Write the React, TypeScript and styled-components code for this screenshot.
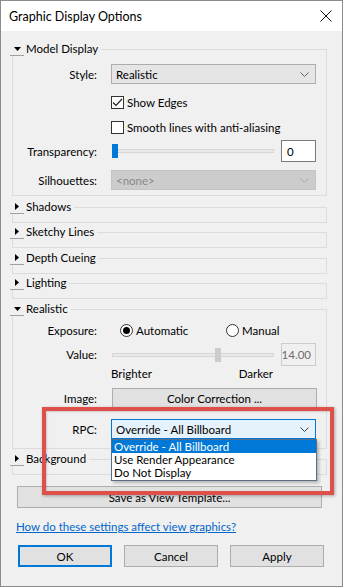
import React from 'react'
import styled, { createGlobalStyle } from 'styled-components'

const GlobalStyle = createGlobalStyle`
  html, body {
    margin: 0;
    padding: 0;
    background: #ffffff;
  }
  body {
    font-family: Lato, 'Noto Sans', Arial, sans-serif;
    font-size: 11.5px;
    color: #000;
  }
  * {
    box-sizing: border-box;
  }
`

const Window = styled.div`
  position: relative;
  width: 343px;
  height: 587px;
  border: 1px solid #8c8c8c;
  background: #f0f0f0;
  display: flex;
  flex-direction: column;
  overflow: hidden;
`

const TitleBar = styled.div`
  height: 30px;
  background: #ffffff;
  display: flex;
  align-items: center;
  justify-content: space-between;
  padding: 0 10px 0 8px;
  flex-shrink: 0;
`

const Title = styled.span`
  font-size: 12.5px;
`

const Body = styled.div`
  display: flex;
  flex-direction: column;
  padding-top: 12px;
`

const Group = styled.div<{ $mt?: number; $h?: number }>`
  margin: ${(p) => p.$mt ?? 0}px 15px 0 11px;
  border: 1px solid #dcdcdc;
  height: ${(p) => (p.$h ? `${p.$h}px` : 'auto')};
  display: flex;
  flex-direction: column;
`

const Legend = styled.div`
  display: flex;
  align-items: center;
  height: 14px;
  margin: -8px 0 0 -3px;
  align-self: flex-start;
`

const Toggle = styled.span`
  width: 14px;
  height: 14px;
  background: #f0f0f0;
  border-bottom: 1px solid #a0a0a0;
  display: flex;
  align-items: center;
  justify-content: center;
`

const LegendText = styled.span`
  background: #f0f0f0;
  padding: 0 3px 0 2px;
  line-height: 14px;
`

const Rows = styled.div<{ $pt: number; $pb: number }>`
  padding: ${(p) => p.$pt}px 0 ${(p) => p.$pb}px 0;
  display: flex;
  flex-direction: column;
`

const Row = styled.div<{ $mt: number; $h: number }>`
  display: grid;
  grid-template-columns: 84px 205px;
  column-gap: 14px;
  align-items: center;
  height: ${(p) => p.$h}px;
  margin-top: ${(p) => p.$mt}px;
`

const Label = styled.span`
  text-align: right;
  white-space: nowrap;
`

const Cell = styled.div`
  position: relative;
  display: flex;
  align-items: center;
  height: 100%;
`

const Select = styled.div<{ $state?: 'normal' | 'disabled' | 'open' }>`
  width: 205px;
  height: 20px;
  display: flex;
  align-items: center;
  justify-content: space-between;
  padding: 0 6px 0 4px;
  border: 1px solid
    ${(p) =>
      p.$state === 'open' ? '#0078d7' : p.$state === 'disabled' ? '#c4c4c4' : '#adadad'};
  background: ${(p) =>
    p.$state === 'open' ? '#e5f1fb' : p.$state === 'disabled' ? '#cccccc' : '#e5e5e5'};
  color: ${(p) => (p.$state === 'disabled' ? '#8a8a8a' : '#000')};
`

const CheckLine = styled.label`
  display: flex;
  align-items: center;
  gap: 3px;
`

const CheckBox = styled.span`
  width: 13px;
  height: 13px;
  border: 1px solid #333;
  background: #fff;
  display: flex;
  align-items: center;
  justify-content: center;
`

const Track = styled.div<{ $w: number }>`
  position: relative;
  width: ${(p) => p.$w}px;
  height: 4px;
  margin-left: 1px;
  background: #e7eaea;
  border: 1px solid #d6d6d6;
`

const Thumb = styled.span<{ $disabled?: boolean }>`
  position: absolute;
  top: -6px;
  width: 6px;
  height: 14px;
  background: ${(p) => (p.$disabled ? '#cccccc' : '#0078d7')};
`

const TextBox = styled.div<{ $disabled?: boolean }>`
  margin-left: auto;
  width: 35px;
  height: 100%;
  border: 1px solid ${(p) => (p.$disabled ? '#cccccc' : '#7a7a7a')};
  background: ${(p) => (p.$disabled ? '#f0f0f0' : '#ffffff')};
  color: ${(p) => (p.$disabled ? '#6d6d6d' : '#000')};
  display: flex;
  align-items: center;
  justify-content: ${(p) => (p.$disabled ? 'flex-end' : 'flex-start')};
  padding: 0 4px 0 5px;
`

const Radios = styled.div`
  display: flex;
  align-items: center;
  padding-left: 9px;
`

const RadioLine = styled.label<{ $w?: number }>`
  display: flex;
  align-items: center;
  gap: 3px;
  width: ${(p) => (p.$w ? `${p.$w}px` : 'auto')};
`

const Radio = styled.span<{ $on?: boolean }>`
  width: 13px;
  height: 13px;
  border-radius: 50%;
  border: 1px solid #333;
  background: #fff;
  display: flex;
  align-items: center;
  justify-content: center;
  &::after {
    content: '';
    width: 7px;
    height: 7px;
    border-radius: 50%;
    background: ${(p) => (p.$on ? '#000' : 'transparent')};
  }
`

const Scale = styled.div`
  width: 162px;
  display: flex;
  justify-content: space-between;
`

const Button = styled.div<{ $w?: number; $default?: boolean }>`
  width: ${(p) => (p.$w ? `${p.$w}px` : '100%')};
  height: ${(p) => (p.$w ? '22px' : '20px')};
  border: ${(p) => (p.$default ? '2px solid #0078d7' : '1px solid #adadad')};
  background: #e1e1e1;
  display: flex;
  align-items: center;
  justify-content: center;
  margin-left: 1px;
`

const WideButton = styled.div`
  margin: 11px 0 0 16px;
  width: 305px;
  height: 22px;
  border: 1px solid #adadad;
  background: #e1e1e1;
  display: flex;
  align-items: center;
  justify-content: center;
`

const HelpLink = styled.a`
  margin: 11px 0 0 15px;
  color: #0066cc;
  text-decoration: underline;
  line-height: 15px;
  align-self: flex-start;
`

const Footer = styled.div`
  margin: 11px 0 0 16px;
  display: flex;
  gap: 11px;
`

const DropList = styled.div`
  position: absolute;
  top: 100%;
  left: 0;
  width: 206px;
  background: #fff;
  border: 1px solid #5a6e86;
  box-shadow: 2px 2px 3px rgba(0, 0, 0, 0.25);
  z-index: 2;
  padding-bottom: 1px;
`

const DropItem = styled.div<{ $active?: boolean }>`
  height: 13px;
  line-height: 13px;
  padding-left: 2px;
  white-space: nowrap;
  background: ${(p) => (p.$active ? '#0078d7' : 'transparent')};
  color: ${(p) => (p.$active ? '#fff' : '#000')};
`

const Highlight = styled.div`
  position: absolute;
  left: 41px;
  top: 406px;
  width: 292px;
  height: 88px;
  border: 4px solid #e0504a;
  box-shadow: 1px 1px 3px rgba(0, 0, 0, 0.3), inset 1px 1px 2px rgba(0, 0, 0, 0.15);
  z-index: 3;
  pointer-events: none;
`

const Chevron = ({ color = '#606060' }: { color?: string }) => (
  <svg width="9" height="5" viewBox="0 0 9 5">
    <polyline points="0.5,0.5 4.5,4.5 8.5,0.5" fill="none" stroke={color} strokeWidth="1" />
  </svg>
)

const Caret = ({ open }: { open: boolean }) =>
  open ? (
    <svg width="7" height="4" viewBox="0 0 7 4">
      <polygon points="0,0 7,0 3.5,4" fill="#000" />
    </svg>
  ) : (
    <svg width="4" height="7" viewBox="0 0 4 7">
      <polygon points="0,0 4,3.5 0,7" fill="#000" />
    </svg>
  )

const CloseIcon = () => (
  <svg width="12" height="12" viewBox="0 0 12 12">
    <path d="M0.5 0.5 L11.5 11.5 M11.5 0.5 L0.5 11.5" stroke="#111" strokeWidth="1" />
  </svg>
)

const Tick = () => (
  <svg width="11" height="9" viewBox="0 0 11 9">
    <polyline points="1,4.5 4,7.5 10,1" fill="none" stroke="#222" strokeWidth="1.2" />
  </svg>
)

function Section({
  title,
  open = false,
  mt,
  children,
}: {
  title: string
  open?: boolean
  mt: number
  children?: React.ReactNode
}) {
  return (
    <Group $mt={mt} $h={open ? undefined : 16}>
      <Legend>
        <Toggle>
          <Caret open={open} />
        </Toggle>
        <LegendText>{title}</LegendText>
      </Legend>
      {children}
    </Group>
  )
}

export default function App() {
  return (
    <>
      <GlobalStyle />
      <Window>
        <TitleBar>
          <Title>Graphic Display Options</Title>
          <CloseIcon />
        </TitleBar>
        <Body>
          <Section title="Model Display" open mt={6}>
            <Rows $pt={8} $pb={5}>
              <Row $mt={0} $h={20}>
                <Label>Style:</Label>
                <Select>
                  <span>Realistic</span>
                  <Chevron />
                </Select>
              </Row>
              <Row $mt={8} $h={20}>
                <span />
                <CheckLine>
                  <CheckBox>
                    <Tick />
                  </CheckBox>
                  Show Edges
                </CheckLine>
              </Row>
              <Row $mt={5} $h={20}>
                <span />
                <CheckLine>
                  <CheckBox />
                  Smooth lines with anti-aliasing
                </CheckLine>
              </Row>
              <Row $mt={3} $h={22}>
                <Label>Transparency:</Label>
                <Cell>
                  <Track $w={162}>
                    <Thumb style={{ left: -1 }} />
                  </Track>
                  <TextBox>0</TextBox>
                </Cell>
              </Row>
              <Row $mt={8} $h={20}>
                <Label>Silhouettes:</Label>
                <Select $state="disabled">
                  <span>&lt;none&gt;</span>
                  <Chevron color="#a8a8a8" />
                </Select>
              </Row>
            </Rows>
          </Section>
          <Section title="Shadows" mt={11} />
          <Section title="Sketchy Lines" mt={9} />
          <Section title="Depth Cueing" mt={10} />
          <Section title="Lighting" mt={9} />
          <Section title="Realistic" open mt={10}>
            <Rows $pt={4} $pb={9}>
              <Row $mt={0} $h={20}>
                <Label>Exposure:</Label>
                <Radios>
                  <RadioLine $w={106}>
                    <Radio $on />
                    Automatic
                  </RadioLine>
                  <RadioLine>
                    <Radio />
                    Manual
                  </RadioLine>
                </Radios>
              </Row>
              <Row $mt={3} $h={23}>
                <Label>Value:</Label>
                <Cell>
                  <Track $w={162}>
                    <Thumb $disabled style={{ left: 102 }} />
                  </Track>
                  <TextBox $disabled>14.00</TextBox>
                </Cell>
              </Row>
              <Row $mt={0} $h={14}>
                <span />
                <Scale>
                  <span>Brighter</span>
                  <span>Darker</span>
                </Scale>
              </Row>
              <Row $mt={8} $h={20}>
                <Label>Image:</Label>
                <Button>Color Correction ...</Button>
              </Row>
              <Row $mt={11} $h={20}>
                <Label>RPC:</Label>
                <Cell>
                  <Select $state="open">
                    <span>Override - All Billboard</span>
                    <Chevron color="#404040" />
                  </Select>
                  <DropList>
                    <DropItem $active>Override - All Billboard</DropItem>
                    <DropItem>Use Render Appearance</DropItem>
                    <DropItem>Do Not Display</DropItem>
                  </DropList>
                </Cell>
              </Row>
            </Rows>
          </Section>
          <Section title="Background" mt={10} />
          <WideButton>Save as View Template...</WideButton>
          <HelpLink href="#">How do these settings affect view graphics?</HelpLink>
          <Footer>
            <Button $w={94} $default>
              OK
            </Button>
            <Button $w={94}>Cancel</Button>
            <Button $w={94}>Apply</Button>
          </Footer>
        </Body>
        <Highlight />
      </Window>
    </>
  )
}
